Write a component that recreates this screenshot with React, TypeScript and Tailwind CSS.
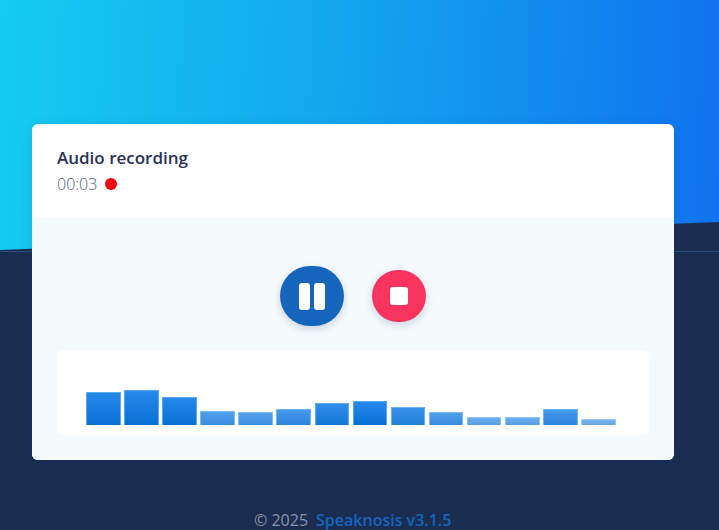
const bars = [
  { h: 33, o: 1 },
  { h: 35, o: 1 },
  { h: 28, o: 1 },
  { h: 14, o: 0.8 },
  { h: 13, o: 0.78 },
  { h: 16, o: 0.85 },
  { h: 22, o: 0.95 },
  { h: 24, o: 1 },
  { h: 18, o: 0.9 },
  { h: 13, o: 0.8 },
  { h: 8, o: 0.68 },
  { h: 8, o: 0.68 },
  { h: 16, o: 0.85 },
  { h: 6, o: 0.62 },
];

export default function App() {
  return (
    <div className="relative h-[530px] w-[719px] overflow-hidden bg-[#1a2d51] font-['Open_Sans',sans-serif]">
      {/* Slanted hero background */}
      <div className="absolute inset-x-0 top-0 h-[251px] bg-[linear-gradient(93deg,#15ccf1_0%,#13a8ee_45%,#1072ef_100%)] [clip-path:polygon(0_0,100%_0,100%_222px,0_250px)]" />
      <div className="absolute inset-x-0 top-[251px] h-px bg-[#27508a]" />

      <div className="relative ml-8 w-[642px] pt-[124px]">
        {/* Card */}
        <div className="overflow-hidden rounded-md bg-white shadow-[0_2px_12px_rgba(20,60,110,0.12)]">
          <div className="h-[94px] px-[25px] pt-[23px]">
            <h1 className="text-[17px] leading-[22px] font-semibold text-[#2b3157]">Audio recording</h1>
            <div className="mt-1 flex items-center gap-2">
              <span className="text-[16px] leading-[22px] font-light text-[#4a6580]">00:03</span>
              <span className="h-3 w-3 rounded-full bg-[#f5000f]" />
            </div>
          </div>

          <div className="h-[242px] bg-[#f5fafd] px-[25px] pt-12">
            {/* Controls */}
            <div className="flex items-center justify-center gap-7">
              <button className="flex h-[60px] w-16 items-center justify-center gap-1 rounded-full bg-[#1565bd] shadow-[0_3px_8px_rgba(20,60,110,0.2)]">
                <span className="h-[27px] w-[11px] rounded-[3px] bg-white" />
                <span className="h-[27px] w-[11px] rounded-[3px] bg-white" />
              </button>
              <button className="flex h-[52px] w-[54px] items-center justify-center rounded-full bg-[#f8345e] shadow-[0_3px_8px_rgba(20,60,110,0.2)]">
                <span className="h-[18px] w-[18px] rounded-[3px] bg-white" />
              </button>
            </div>

            {/* Audio bars */}
            <div className="mt-6 flex h-[85px] items-end gap-[3.6px] rounded-md bg-white pr-8 pb-[10px] pl-[29px]">
              {bars.map((bar, i) => (
                <div
                  key={i}
                  className="w-[34.5px] border border-b-0 border-[#5aa8ee] bg-gradient-to-b from-[#2589ec] to-[#0670d4]"
                  style={{ height: bar.h, opacity: bar.o }}
                />
              ))}
            </div>
          </div>
        </div>
      </div>

      {/* Footer */}
      <div className="absolute bottom-0 left-[254px] flex h-5 items-center gap-2 text-[16px] whitespace-nowrap">
        <span className="text-[#8a95a8]">© 2025</span>
        <span className="font-semibold text-[#1565bd]">Speaknosis v3.1.5</span>
      </div>
    </div>
  );
}
